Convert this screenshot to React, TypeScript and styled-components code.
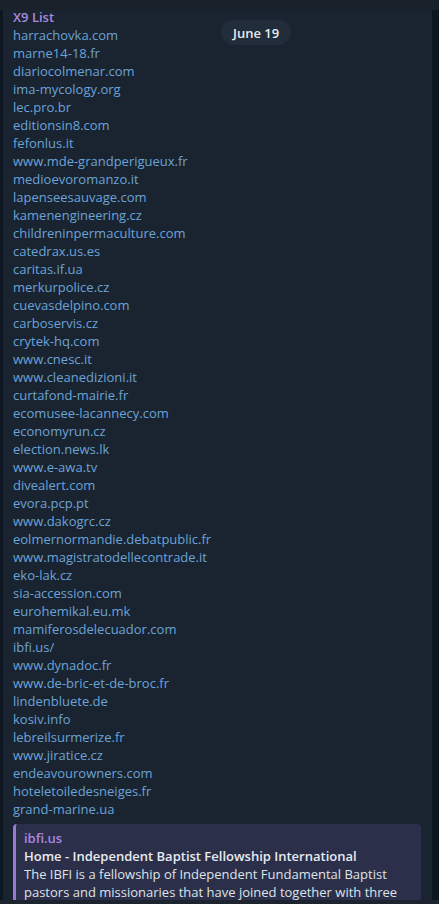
import React from "react";
import styled, { createGlobalStyle } from "styled-components";

const Global = createGlobalStyle`
  html, body { margin: 0; padding: 0; background: #0e1621; }
  body { font-family: "Open Sans", "Noto Sans", sans-serif; overflow: hidden; }
  #root { width: 439px; height: 904px; }
`;

const Page = styled.div`
  width: 439px;
  height: 904px;
  background: #0e1621;
  display: flex;
  flex-direction: column;
  overflow: hidden;
  position: relative;
`;

const TopBar = styled.div`
  height: 10px;
  flex: none;
  background: #19212b;
`;

const Body = styled.div`
  flex: 1;
  display: flex;
  min-height: 0;
`;

const Column = styled.div`
  width: 429px;
  margin-left: 3px;
  background: #1a2431;
  display: flex;
  flex-direction: column;
  min-height: 0;
  clip-path: inset(-12px 0 0 0);
`;

const Bubble = styled.div`
  padding: 0 11px 0 10px;
  display: flex;
  flex-direction: column;
`;

const Title = styled.div`
  color: #a98ade;
  font-weight: 600;
  font-size: 13px;
  line-height: 18px;
  margin-top: -2px;
`;

const Link = styled.div`
  color: #6ba3d6;
  font-size: 13px;
  line-height: 18px;
  white-space: nowrap;
`;

const Preview = styled.div`
  margin-top: 6px;
  background: #2b2f4a;
  border-left: 3px solid #9877d6;
  border-radius: 4px;
  padding: 5px 8px 8px 8px;
  display: flex;
  flex-direction: column;
`;

const Site = styled.div`
  color: #a787e0;
  font-weight: 600;
  font-size: 13px;
  line-height: 18px;
`;

const PTitle = styled.div`
  color: #e8ebef;
  font-weight: 600;
  font-size: 13px;
  line-height: 18px;
`;

const PText = styled.div`
  color: #dfe3e8;
  font-size: 13px;
  line-height: 18px;
`;

const DatePill = styled.div`
  position: absolute;
  left: 221px;
  top: 20px;
  height: 25px;
  padding: 0 12px;
  border-radius: 13px;
  background: #212d3b;
  color: #e7ebef;
  font-size: 13px;
  font-weight: 600;
  display: flex;
  align-items: center;
`;

const BottomBar = styled.div`
  height: 4px;
  flex: none;
  background: #1c2430;
  position: relative;
  z-index: 1;
`;

const links = [
  "harrachovka.com",
  "marne14-18.fr",
  "diariocolmenar.com",
  "ima-mycology.org",
  "lec.pro.br",
  "editionsin8.com",
  "fefonlus.it",
  "www.mde-grandperigueux.fr",
  "medioevoromanzo.it",
  "lapenseesauvage.com",
  "kamenengineering.cz",
  "childreninpermaculture.com",
  "catedrax.us.es",
  "caritas.if.ua",
  "merkurpolice.cz",
  "cuevasdelpino.com",
  "carboservis.cz",
  "crytek-hq.com",
  "www.cnesc.it",
  "www.cleanedizioni.it",
  "curtafond-mairie.fr",
  "ecomusee-lacannecy.com",
  "economyrun.cz",
  "election.news.lk",
  "www.e-awa.tv",
  "divealert.com",
  "evora.pcp.pt",
  "www.dakogrc.cz",
  "eolmernormandie.debatpublic.fr",
  "www.magistratodellecontrade.it",
  "eko-lak.cz",
  "sia-accession.com",
  "eurohemikal.eu.mk",
  "mamiferosdelecuador.com",
  "ibfi.us/",
  "www.dynadoc.fr",
  "www.de-bric-et-de-broc.fr",
  "lindenbluete.de",
  "kosiv.info",
  "lebreilsurmerize.fr",
  "www.jiratice.cz",
  "endeavourowners.com",
  "hoteletoiledesneiges.fr",
  "grand-marine.ua",
];

export default function App() {
  return (
    <Page>
      <Global />
      <TopBar />
      <Body>
        <Column>
          <Bubble>
            <Title>X9 List</Title>
            {links.map((l) => (
              <Link key={l}>{l}</Link>
            ))}
            <Preview>
              <Site>ibfi.us</Site>
              <PTitle>Home - Independent Baptist Fellowship International</PTitle>
              <PText>
                The IBFI is a fellowship of Independent Fundamental Baptist pastors and
                missionaries that have joined together with three
              </PText>
            </Preview>
          </Bubble>
        </Column>
      </Body>
      <BottomBar />
      <DatePill>June 19</DatePill>
    </Page>
  );
}
